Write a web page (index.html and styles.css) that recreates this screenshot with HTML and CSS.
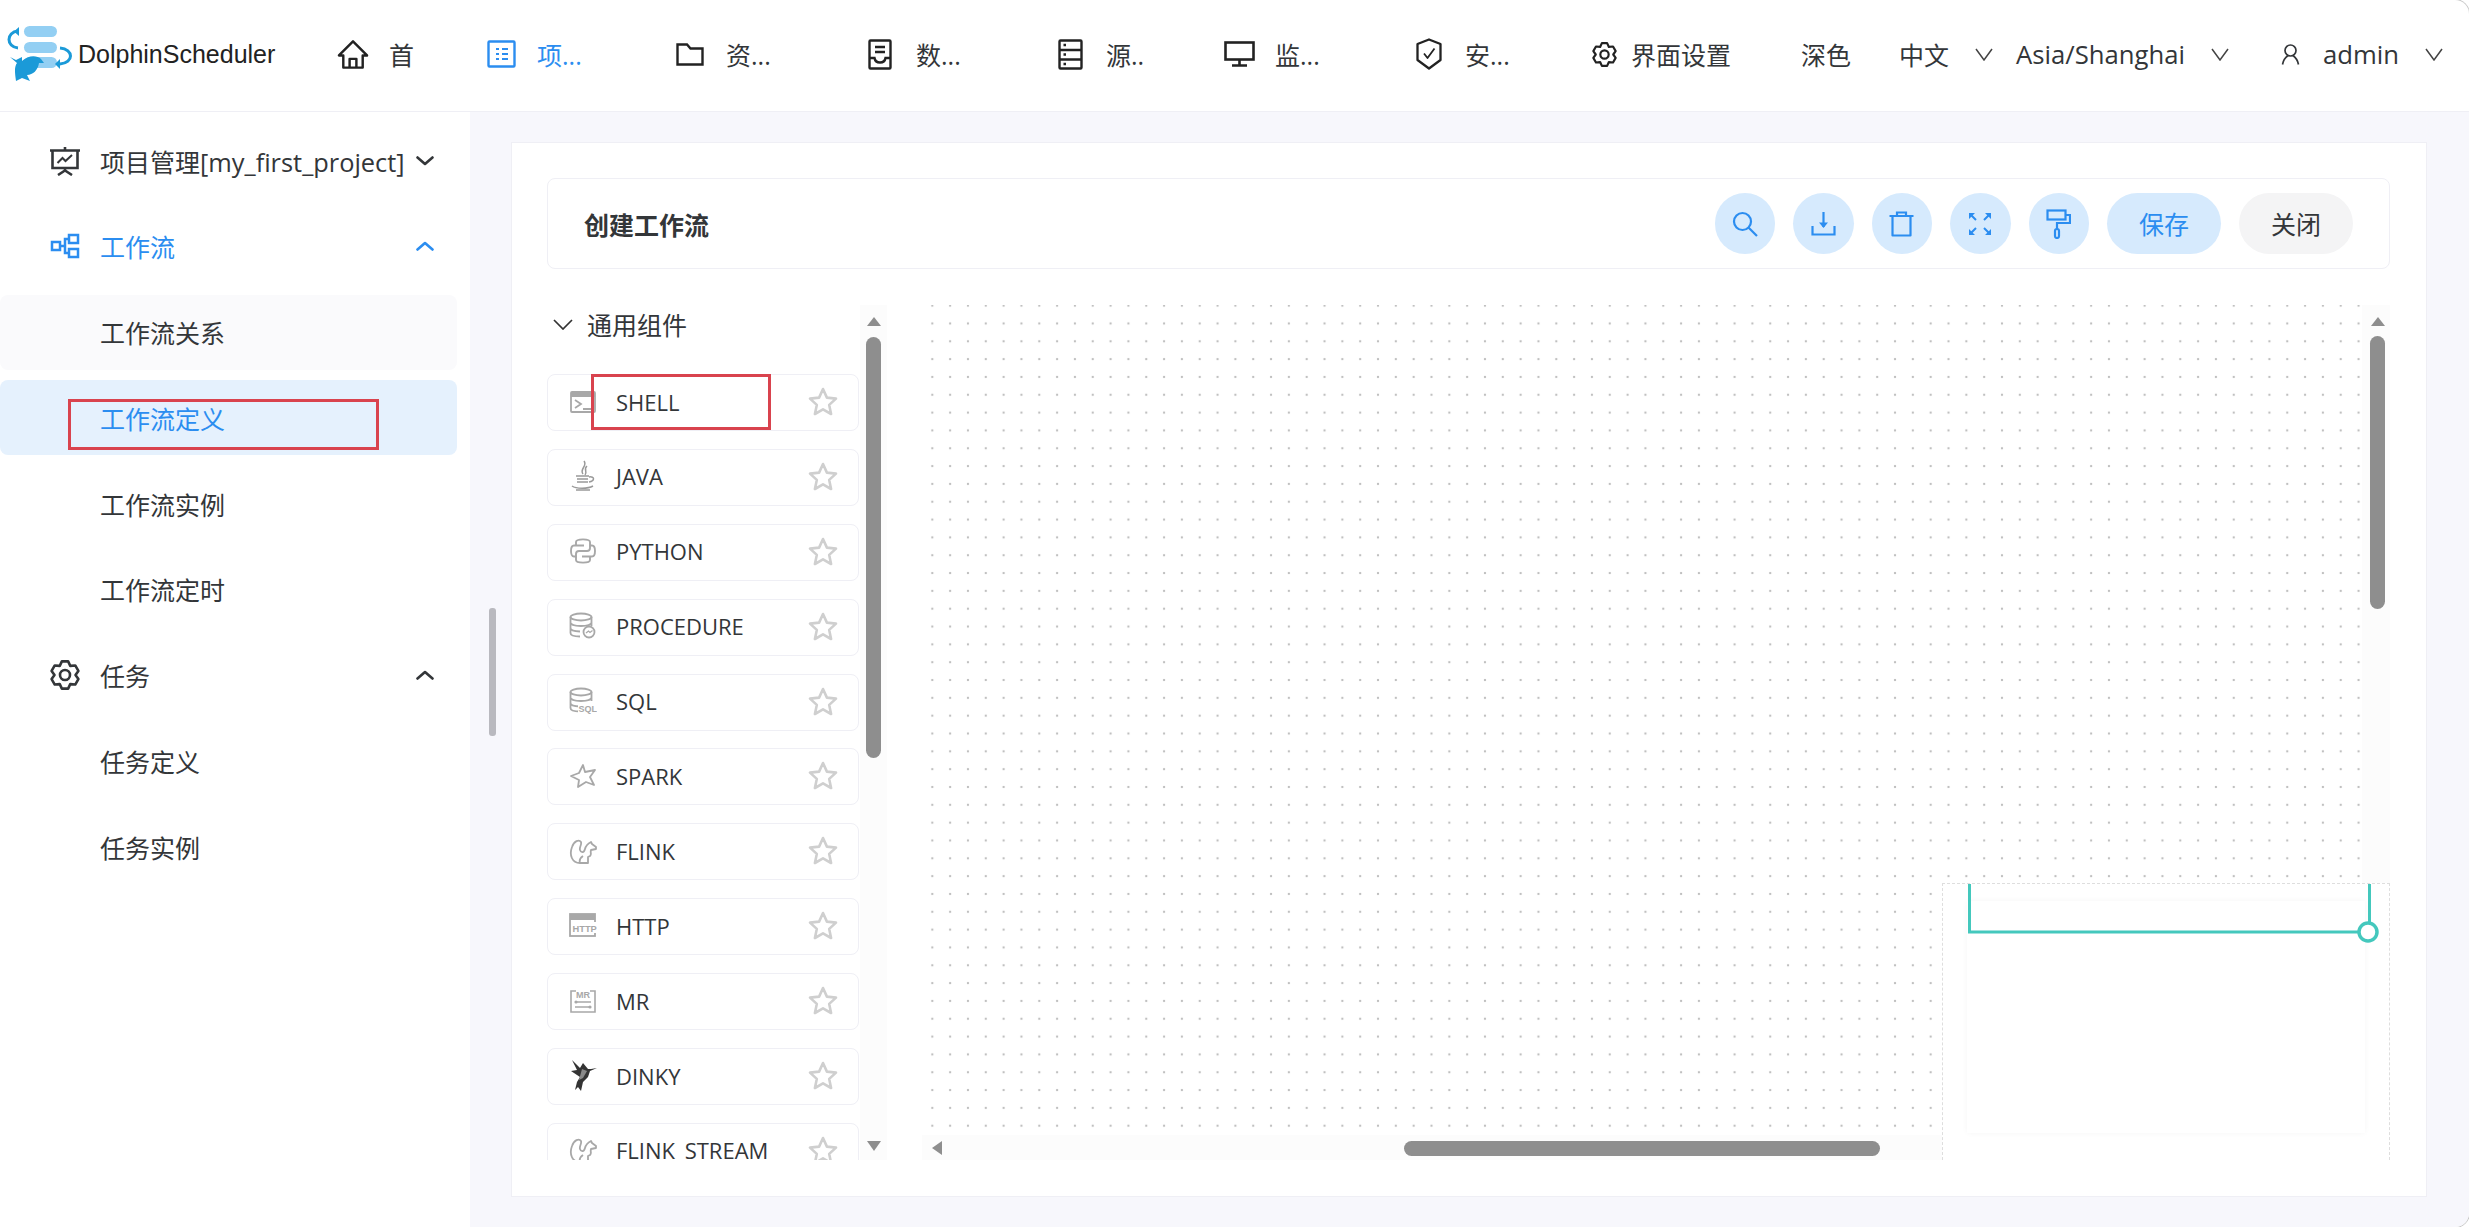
FILE: index.html
```html
<!DOCTYPE html>
<html lang="zh-CN">
<head>
  <meta charset="UTF-8">
  <title>DolphinScheduler</title>
  <link rel="stylesheet" href="styles.css">
</head>
<body>
  <svg class="defs" width="0" height="0">
    <symbol id="gear" viewBox="0 0 30 30">
      <path d="M11.85 1.36H18.15L20.25 5.91L25.24 5.45L28.39 10.91L25.5 15L28.39 19.09L25.24 24.55L20.25 24.09L18.15 28.64H11.85L9.75 24.09L4.76 24.55L1.61 19.09L4.5 15L1.61 10.91L4.76 5.45L9.75 5.91Z" fill="none" stroke="currentColor" stroke-width="2.6" stroke-linejoin="round"/>
      <circle cx="15" cy="15" r="5" fill="none" stroke="currentColor" stroke-width="2.6"/>
    </symbol>
    <symbol id="star" viewBox="0 0 30 29">
      <path d="M15 2L18.9 10.6L28 11.6L21.2 17.9L23.1 27L15 22.4L6.9 27L8.8 17.9L2 11.6L11.1 10.6Z" fill="none" stroke="currentColor" stroke-width="2.6" stroke-linejoin="round"/>
    </symbol>
    <symbol id="db" viewBox="0 0 28 28">
      <g fill="none" stroke="currentColor" stroke-width="1.8">
        <ellipse cx="12" cy="5" rx="10.5" ry="3.5"/>
        <path d="M1.5 5V21C1.5 23 5 24.5 11 24.5M22.5 5V14M1.5 10.5C1.5 12.5 6 14 12 14S22.5 12.5 22.5 10.5M1.5 16C1.5 18 5 19.3 11 19.5"/>
      </g>
    </symbol>
    <symbol id="squirrel" viewBox="0 0 28 28">
      <path d="M11 26C3 26 0 18 3 10C5 4 10 2 12 5C13 8 10 10 11 13C12 16 15 16 16 12C17 8 20 6 22 5L23 7L27 10L27 12L22 13C21 16 23 17 21 19L19 20L19 26H11C10 23 11 21 14 19" fill="none" stroke="currentColor" stroke-width="1.8" stroke-linejoin="round"/>
    </symbol>
    <symbol id="chev-thin" viewBox="0 0 18 13">
      <path d="M1 1L9 12L17 1" fill="none" stroke="currentColor" stroke-width="1.5"/>
    </symbol>
    <symbol id="chev-down" viewBox="0 0 18 10">
      <path d="M1.5 1.5L9 8L16.5 1.5" fill="none" stroke="currentColor" stroke-width="2.6" stroke-linecap="round" stroke-linejoin="round"/>
    </symbol>
    <symbol id="chev-up" viewBox="0 0 18 10">
      <path d="M1.5 8.5L9 2L16.5 8.5" fill="none" stroke="currentColor" stroke-width="2.6" stroke-linecap="round" stroke-linejoin="round"/>
    </symbol>
  </svg>

  <div class="app">
    <header class="topbar">
      <div class="logo">
        <svg width="68" height="56" viewBox="0 0 68 56">
          <rect x="18" y="0" width="33" height="11" rx="5.5" fill="#93cff3"/>
          <rect x="18" y="16" width="33" height="11" rx="5.5" fill="#93cff3"/>
          <rect x="18" y="31" width="33" height="11" rx="5.5" fill="#93cff3"/>
          <path d="M12 5C0 6 0 21 12 22" fill="none" stroke="#1b9ad8" stroke-width="3"/>
          <path d="M13 1V10L8 5.5Z" fill="#1b9ad8"/>
          <path d="M54 22C68 23 68 37 54 38" fill="none" stroke="#1b9ad8" stroke-width="3"/>
          <path d="M54 33V43L49 38Z" fill="#1b9ad8"/>
          <path d="M4 31L10 34L16 31L16 35C22 29 31 29 35 33L38 37L33 37C32 44 27 49 21 49L24 55L16 52L10 55C9 47 8 41 11 37Z" fill="#1b9ad8"/>
        </svg>
        <span class="logo-name">DolphinScheduler</span>
      </div>
      <nav class="topnav">
        <div class="nav-item">
          <span class="nav-ico"><svg width="33" height="31" viewBox="0 0 33 31" fill="none" stroke="currentColor" stroke-width="2.5" stroke-linejoin="round"><path d="M16.5 2L2 16.5H6.5V29H26.5V16.5H31Z"/><path d="M13 29V20H20V29"/></svg></span>
          <span>首</span>
        </div>
        <div class="nav-item active">
          <span class="nav-ico"><svg width="29" height="28" viewBox="0 0 29 28" fill="none" stroke="currentColor" stroke-width="2.4"><rect x="1.5" y="1.5" width="26" height="25" rx="1"/><path d="M9 9H12M15 9H21M9 14H12M15 14H21M9 19H12M15 19H21" stroke-width="2"/></svg></span>
          <span>项...</span>
        </div>
        <div class="nav-item">
          <span class="nav-ico"><svg width="28" height="23" viewBox="0 0 28 23" fill="none" stroke="currentColor" stroke-width="2.4"><path d="M1.5 1.5H11L14.5 5.5H26.5V21.5H1.5Z"/></svg></span>
          <span>资...</span>
        </div>
        <div class="nav-item">
          <span class="nav-ico"><svg width="24" height="31" viewBox="0 0 24 31" fill="none" stroke="currentColor" stroke-width="2.4"><rect x="1.5" y="1.5" width="21" height="28" rx="1"/><path d="M7 8H17M7 13H17"/><path d="M1.5 19H6.5C7.5 25 16.5 25 17.5 19H22.5"/></svg></span>
          <span>数...</span>
        </div>
        <div class="nav-item">
          <span class="nav-ico"><svg width="25" height="31" viewBox="0 0 25 31" fill="none" stroke="currentColor" stroke-width="2.4"><rect x="1.5" y="1.5" width="22" height="28" rx="1"/><path d="M1.5 11H23.5M1.5 20.5H23.5"/><path d="M5.5 6H8M5.5 15.5H8M5.5 25H8"/></svg></span>
          <span>源..</span>
        </div>
        <div class="nav-item">
          <span class="nav-ico"><svg width="31" height="26" viewBox="0 0 31 26" fill="none" stroke="currentColor" stroke-width="2.6"><rect x="1.5" y="1.5" width="28" height="17"/><path d="M15.5 19V24M8 24.5H23"/></svg></span>
          <span>监...</span>
        </div>
        <div class="nav-item">
          <span class="nav-ico"><svg width="26" height="32" viewBox="0 0 26 32" fill="none" stroke="currentColor" stroke-width="2.3" stroke-linejoin="round"><path d="M13 1.5L24.5 6V22L13 30.5L1.5 22V6Z"/><path d="M8 15.5L11.5 20L18.5 10.5" stroke-width="1.8"/></svg></span>
          <span>安...</span>
        </div>
        <div class="nav-item gear-item">
          <span class="nav-ico"><svg class="gear-top" width="25" height="25"><use href="#gear"/></svg></span>
          <span>界面设置</span>
        </div>
        <div class="nav-item"><span>深色</span></div>
        <div class="nav-item">
          <span>中文</span>
          <svg class="sel-chev" width="18" height="13"><use href="#chev-thin"/></svg>
        </div>
        <div class="nav-item">
          <span class="latin">Asia/Shanghai</span>
          <svg class="sel-chev" width="18" height="13"><use href="#chev-thin"/></svg>
        </div>
        <div class="nav-item">
          <svg class="user-ico" width="19" height="21" viewBox="0 0 19 21" fill="none" stroke="currentColor" stroke-width="1.7"><circle cx="9.5" cy="6.5" r="5.5"/><path d="M1.5 20.5C2.5 15 5 13 7 11.5M17.5 20.5C16.5 15 14 13 12 11.5"/></svg>
          <span class="latin">admin</span>
          <svg class="sel-chev" width="18" height="13"><use href="#chev-thin"/></svg>
        </div>
      </nav>
    </header>

    <div class="content">
      <aside class="sidebar">
        <div class="menu-item">
          <span class="menu-ico"><svg width="30" height="30" viewBox="0 0 30 30" fill="none" stroke="currentColor" stroke-width="2.6"><path d="M0 4.5H30M2.5 4.5V22H27.5V4.5M15 1V4.5M15 22V24.5M8 29L15 24.5L22 29"/><path d="M7.5 17L12.5 12L15.5 15L22 9" stroke-width="2"/></svg></span>
          <span>项目管理<span class="project-name">[my_first_project]</span></span>
          <svg class="menu-chev" width="18" height="10"><use href="#chev-down"/></svg>
        </div>
        <div class="menu-item blue">
          <span class="menu-ico"><svg width="30" height="26" viewBox="0 0 30 26" fill="none" stroke="currentColor" stroke-width="2.5"><rect x="2" y="9" width="8" height="8"/><rect x="19" y="2" width="9" height="8"/><rect x="19" y="16" width="9" height="8"/><path d="M10 13H15V6H19M15 13V20H19"/></svg></span>
          <span>工作流</span>
          <svg class="menu-chev" width="18" height="10"><use href="#chev-up"/></svg>
        </div>
        <div class="menu-item sub hovered"><span>工作流关系</span></div>
        <div class="menu-item sub selected">
          <span>工作流定义</span>
          <div class="red-box side-box"></div>
        </div>
        <div class="menu-item sub"><span>工作流实例</span></div>
        <div class="menu-item sub"><span>工作流定时</span></div>
        <div class="menu-item">
          <span class="menu-ico"><svg width="30" height="30"><use href="#gear"/></svg></span>
          <span>任务</span>
          <svg class="menu-chev" width="18" height="10"><use href="#chev-up"/></svg>
        </div>
        <div class="menu-item sub"><span>任务定义</span></div>
        <div class="menu-item sub"><span>任务实例</span></div>
      </aside>
      <div class="side-scroll"></div>

      <main class="main">
        <section class="card">
          <div class="toolbar">
            <h2 class="title">创建工作流</h2>
            <div class="actions">
              <button class="round-btn"><svg width="26" height="26" viewBox="0 0 26 26" fill="none" stroke="currentColor" stroke-width="2.2"><circle cx="10.5" cy="10.5" r="8.5"/><path d="M16.5 16.5L25 25"/></svg></button>
              <button class="round-btn"><svg width="25" height="25" viewBox="0 0 25 25" fill="none" stroke="currentColor" stroke-width="2.2"><path d="M12.5 1V16"/><path d="M8 11.5H17L12.5 17Z" fill="currentColor" stroke="none"/><path d="M1.5 15V23.5H23.5V15"/></svg></button>
              <button class="round-btn"><svg width="25" height="26" viewBox="0 0 25 26" fill="none" stroke="currentColor" stroke-width="2.2"><path d="M0.5 5H24.5M8 5V1.5H17V5"/><path d="M3.5 5V24.5H21.5V5" stroke-linejoin="round"/></svg></button>
              <button class="round-btn"><svg width="24" height="24" viewBox="0 0 24 24" fill="none" stroke="currentColor" stroke-width="2"><path d="M2 2L8 8M22 2L16 8M2 22L8 16M22 22L16 16"/><path d="M1 1H7L1 7ZM23 1H17L23 7ZM1 23H7L1 17ZM23 23H17L23 17Z" fill="currentColor" stroke="none"/></svg></button>
              <button class="round-btn"><svg width="25" height="30" viewBox="0 0 25 30" fill="none" stroke="currentColor" stroke-width="2.2"><rect x="1.5" y="1.5" width="18" height="9"/><path d="M20 6H24V14H11V20"/><rect x="9" y="20" width="4" height="9" rx="2"/></svg></button>
              <button class="text-btn primary">保存</button>
              <button class="text-btn">关闭</button>
            </div>
          </div>

          <div class="dag">
            <div class="panel">
              <div class="panel-head">
                <svg class="panel-chev" width="20" height="11" viewBox="0 0 20 11"><path d="M1 1L10 10L19 1" fill="none" stroke="currentColor" stroke-width="1.7"/></svg>
                <span>通用组件</span>
              </div>
              <div class="task-list">
                <div class="task">
                  <span class="task-ico"><svg width="28" height="24" viewBox="0 0 28 24" fill="none" stroke="#a8a8a8" stroke-width="1.8"><rect x="2" y="2" width="24" height="20" rx="1"/><path d="M2 5H26" stroke-width="4"/><path d="M6 10L12 14L6 18M14 19H22"/></svg></span>
                  <span>SHELL</span>
                  <svg class="star" width="30" height="29"><use href="#star"/></svg>
                  <div class="red-box shell-box"></div>
                </div>
                <div class="task">
                  <span class="task-ico"><svg width="26" height="32" viewBox="0 0 26 32" fill="none" stroke="#999" stroke-width="1.5"><path d="M14 1C18 6 9 9 13 14M17 6C13 9 18 12 15 15"/><path d="M6 16H19M7 19H18M7 22H18M2 26C6 29 18 29 23 26M6 30H20M19 17C25 16 25 21 19 22"/></svg></span>
                  <span>JAVA</span>
                  <svg class="star" width="30" height="29"><use href="#star"/></svg>
                </div>
                <div class="task">
                  <span class="task-ico"><svg width="28" height="28" viewBox="0 0 28 28" fill="none" stroke="#a8a8a8" stroke-width="1.9"><path d="M7 9V5C7 1.5 21 1.5 21 5V11C21 13 19.5 14 18 14H10C8 14 7 15.5 7 17V19.5H5C1 19.5 1 8.5 5 8.5H15"/><path d="M21 19V23C21 26.5 7 26.5 7 23V19.5M21 8.5H23C27 8.5 27 19.5 23 19.5H13"/></svg></span>
                  <span>PYTHON</span>
                  <svg class="star" width="30" height="29"><use href="#star"/></svg>
                </div>
                <div class="task">
                  <span class="task-ico"><svg class="ico-box" width="28" height="28"><use href="#db"/><circle cx="20" cy="20" r="5.5" fill="#fff" stroke="currentColor" stroke-width="1.8"/><path d="M17 21L19.5 19L21 20.5L23.5 18.5" fill="none" stroke="currentColor" stroke-width="1.3"/></svg></span>
                  <span>PROCEDURE</span>
                  <svg class="star" width="30" height="29"><use href="#star"/></svg>
                </div>
                <div class="task">
                  <span class="task-ico"><svg class="ico-box" width="28" height="28"><use href="#db"/><rect x="9" y="16" width="19" height="10" fill="#fff"/><text x="9.5" y="25" class="ico-text bold">SQL</text></svg></span>
                  <span>SQL</span>
                  <svg class="star" width="30" height="29"><use href="#star"/></svg>
                </div>
                <div class="task">
                  <span class="task-ico"><svg width="27" height="26" viewBox="0 0 27 26" fill="none" stroke="#a8a8a8" stroke-width="1.8" stroke-linejoin="round"><path d="M13 2L15 9L25 7L20 14L24 22L16 19L8 24L9 17L1 13L9 10Z"/></svg></span>
                  <span>SPARK</span>
                  <svg class="star" width="30" height="29"><use href="#star"/></svg>
                </div>
                <div class="task">
                  <span class="task-ico"><svg class="ico-box" width="28" height="28"><use href="#squirrel"/></svg></span>
                  <span>FLINK</span>
                  <svg class="star" width="30" height="29"><use href="#star"/></svg>
                </div>
                <div class="task">
                  <span class="task-ico"><svg class="ico-box" width="29" height="25" viewBox="0 0 29 25"><rect x="1" y="1" width="25" height="22" fill="none" stroke="currentColor" stroke-width="1.8"/><rect x="1" y="1" width="25" height="6" fill="currentColor"/><rect x="3" y="9" width="26" height="11" fill="#fff"/><text x="3.5" y="18.5" class="ico-text bold wide">HTTP</text></svg></span>
                  <span>HTTP</span>
                  <svg class="star" width="30" height="29"><use href="#star"/></svg>
                </div>
                <div class="task">
                  <span class="task-ico"><svg class="ico-box" width="26" height="24" viewBox="0 0 26 24"><path d="M6 2H1V23H25V2H20" fill="none" stroke="currentColor" stroke-width="1.6"/><text x="6" y="9" class="ico-text bold">MR</text><path d="M5 13H21M5 18H21" stroke="currentColor" stroke-width="1.6"/><circle cx="6" cy="13" r="1.6" fill="currentColor"/><circle cx="20" cy="18" r="1.6" fill="currentColor"/></svg></span>
                  <span>MR</span>
                  <svg class="star" width="30" height="29"><use href="#star"/></svg>
                </div>
                <div class="task">
                  <span class="task-ico"><svg width="28" height="32" viewBox="0 0 28 32"><path d="M3 0L11 8L14 3L19 9L22 9L28 8L21 11L19 17L14 22L12 31L9 27L6 30L8 22L11 17L2 11L8 10Z" fill="#333"/><path d="M13 9L18 11L14 18L10 20Z" fill="#888"/></svg></span>
                  <span>DINKY</span>
                  <svg class="star" width="30" height="29"><use href="#star"/></svg>
                </div>
                <div class="task">
                  <span class="task-ico"><svg class="ico-box" width="28" height="28"><use href="#squirrel"/></svg></span>
                  <span>FLINK_STREAM</span>
                  <svg class="star" width="30" height="29"><use href="#star"/></svg>
                </div>
              </div>
              <div class="scroll-v panel-scroll">
                <i class="arrow up"></i>
                <i class="thumb-v list-thumb"></i>
                <i class="arrow down"></i>
              </div>
            </div>

            <div class="canvas">
              <div class="scroll-v canvas-scroll">
                <i class="arrow up"></i>
                <i class="thumb-v canvas-thumb"></i>
              </div>
              <div class="scroll-h">
                <i class="arrow left"></i>
                <i class="thumb-h"></i>
              </div>
              <div class="minimap">
                <div class="mini-page"></div>
                <svg class="mini-view" width="415" height="62" viewBox="0 0 415 62" fill="none" stroke="#44c8bd" stroke-width="3"><path d="M1.5 0V48H392"/><path d="M401.5 0V38"/><circle cx="400" cy="48" r="9" fill="#fff" stroke-width="3.5"/></svg>
              </div>
            </div>
          </div>
        </section>
      </main>
    </div>
  </div>
</body>
</html>
```

FILE: styles.css
```css
* {
  box-sizing: border-box;
}

html,
body {
  margin: 0;
  height: 100%;
  background: #fff;
  overflow: hidden;
}

body {
  font-family: "Open Sans", "Noto Sans CJK SC", sans-serif;
  font-size: 25px;
  color: #333639;
}

.defs {
  position: absolute;
}

.latin {
  font-size: 25.7px;
}

.project-name {
  font-size: 25.4px;
}

.app {
  display: flex;
  flex-direction: column;
  height: 1227px;
  border-radius: 0 14px 14px 0;
  box-shadow: 0 0 0 1px #c8c8c8;
  overflow: hidden;
  background: #fff;
}

/* top bar */
.topbar {
  display: flex;
  align-items: center;
  flex: none;
  height: 112px;
  padding-left: 6px;
  padding-bottom: 3px;
  border-bottom: 1px solid #efeff5;
}

.logo {
  display: flex;
  align-items: center;
  width: 331px;
  height: 56px;
}

.logo-name {
  font-family: "Liberation Sans", sans-serif;
  font-size: 25px;
  margin-left: 4px;
  color: #222;
}

.topnav {
  display: grid;
  grid-template-columns: 148px 189px 190px 190px 169px 190px 175px 213px 98px 117px 265px 188px;
  flex: 1;
}

.nav-item {
  display: flex;
  align-items: center;
  white-space: nowrap;
}

.nav-item.active {
  color: #2b8df0;
}

.nav-ico {
  display: flex;
  justify-content: center;
  align-items: center;
  width: 32px;
  margin-right: 20px;
  color: #222;
}

.active .nav-ico {
  color: #2b8df0;
}

.gear-item .nav-ico {
  margin-right: 11px;
}

.sel-chev {
  margin-left: 26px;
  color: #444;
}

.user-ico {
  margin-right: 23px;
}

/* sidebar */
.content {
  display: flex;
  flex: 1;
  min-height: 0;
  position: relative;
  background: #f7f7fc;
}

.sidebar {
  flex: none;
  width: 470px;
  padding-top: 11px;
  background: #fff;
}

.menu-item {
  display: flex;
  align-items: center;
  position: relative;
  width: 457px;
  height: 75px;
  margin-bottom: 10.75px;
  padding: 0 23px 0 50px;
  border-radius: 8px;
  white-space: nowrap;
}

.menu-item.blue,
.menu-item.selected {
  color: #2b8df0;
}

.menu-item.sub {
  padding-left: 100px;
}

.menu-item.hovered {
  background: #fafafc;
}

.menu-item.selected {
  background: #e5f1fd;
}

.menu-ico {
  display: flex;
  width: 30px;
  margin-right: 20px;
}

.menu-chev {
  margin-left: auto;
  flex: none;
}

.side-scroll {
  position: absolute;
  left: 489px;
  top: 496px;
  width: 7px;
  height: 128px;
  border-radius: 3px;
  background: #b9b9bf;
}

.red-box {
  position: absolute;
  border: 3px solid #d9434e;
}

.side-box {
  left: 68px;
  top: 19px;
  width: 311px;
  height: 51px;
}

.shell-box {
  left: 43px;
  top: -1px;
  width: 180px;
  height: 56px;
}

/* main card */
.main {
  flex: 1;
  min-width: 0;
  padding: 30px 42px 30px 41px;
}

.card {
  display: flex;
  flex-direction: column;
  height: 100%;
  padding: 35px 36px 36px 35px;
  background: #fff;
  border: 1px solid #efeff5;
}

.toolbar {
  display: flex;
  align-items: center;
  justify-content: space-between;
  flex: none;
  height: 91px;
  padding: 0 36px 0 36px;
  border: 1px solid #efeff5;
  border-radius: 8px;
}

.title {
  margin: 0;
  font-size: 25px;
  font-weight: 700;
}

.actions {
  display: flex;
  gap: 18px;
}

.round-btn,
.text-btn {
  display: flex;
  align-items: center;
  justify-content: center;
  height: 61px;
  padding: 0;
  border: none;
  border-radius: 31px;
  font: inherit;
}

.round-btn {
  width: 60.5px;
  background: #d6eafd;
  color: #2b8df0;
}

.text-btn {
  width: 114px;
  padding-bottom: 2px;
  background: #f4f4f5;
  color: #333639;
}

.text-btn.primary {
  background: #d6eafd;
  color: #2b8df0;
}

/* dag area */
.dag {
  display: flex;
  flex: 1;
  min-height: 0;
  margin-top: 36px;
}

.panel {
  display: flex;
  flex-direction: column;
  flex: none;
  position: relative;
  width: 340px;
  margin-right: 35px;
}

.panel-head {
  display: flex;
  align-items: center;
  flex: none;
  height: 38px;
  margin-bottom: 31px;
  padding-left: 6px;
}

.panel-chev {
  margin-right: 14px;
  color: #333;
}

.task-list {
  flex: 1;
  width: 312px;
  overflow: hidden;
}

.task {
  display: flex;
  align-items: center;
  position: relative;
  height: 57px;
  margin-bottom: 17.9px;
  padding: 0 20px 2px 20px;
  border: 1px solid #efeff5;
  border-radius: 8px;
  font-size: 22px;
  white-space: nowrap;
}

.task-ico {
  display: flex;
  justify-content: center;
  flex: none;
  width: 30px;
  margin-right: 18px;
  color: #a8a8a8;
}

.ico-text {
  font-family: "Liberation Sans", sans-serif;
  font-size: 9px;
  fill: currentColor;
}

.ico-text.bold {
  font-weight: 700;
}

.ico-text.wide {
  font-size: 9.3px;
}

.star {
  margin-left: auto;
  flex: none;
  color: #cfcfcf;
}

/* scrollbars */
.scroll-v {
  position: absolute;
  top: 0;
  width: 27px;
  background: #fcfcfc;
}

.panel-scroll {
  right: 0;
  bottom: 0;
}

.canvas-scroll {
  right: 0;
  bottom: 25px;
  width: 28px;
}

.thumb-v {
  position: absolute;
  left: 6px;
  width: 15px;
  border-radius: 8px;
  background: #8e8e8e;
}

.list-thumb {
  top: 32px;
  height: 421px;
}

.canvas-thumb {
  left: 8px;
  top: 31px;
  height: 273px;
}

.arrow {
  position: absolute;
  width: 0;
  height: 0;
  border-style: solid;
  border-color: transparent;
}

.arrow.up {
  left: 7px;
  top: 12px;
  border-width: 0 7px 9px;
  border-bottom-color: #8e8e8e;
}

.canvas-scroll .arrow.up {
  left: 9px;
}

.arrow.down {
  left: 7px;
  bottom: 9px;
  border-width: 10px 7px 0;
  border-top-color: #8e8e8e;
}

.arrow.left {
  left: 10px;
  top: 6px;
  border-width: 7px 10px 7px 0;
  border-right-color: #8e8e8e;
}

.scroll-h {
  position: absolute;
  left: 0;
  right: 0;
  bottom: 0;
  height: 25px;
  background: #fcfcfc;
}

.thumb-h {
  position: absolute;
  left: 482px;
  top: 6px;
  width: 476px;
  height: 15px;
  border-radius: 8px;
  background: #8e8e8e;
}

.canvas {
  flex: 1;
  position: relative;
  overflow: hidden;
  background-image: radial-gradient(circle, #c0c0c0 1px, transparent 1.6px);
  background-size: 17.83px 17.83px;
  background-position: 1.4px -8.3px;
}

.minimap {
  position: absolute;
  right: 0;
  bottom: 0;
  width: 448px;
  height: 277px;
  background: #fff;
  border: 1px dashed #dedede;
  border-bottom: none;
}

.mini-page {
  position: absolute;
  left: 24px;
  top: 17px;
  width: 398px;
  height: 232px;
  background: #fff;
  box-shadow: 0 0 6px rgba(0, 0, 0, 0.04);
}

.mini-view {
  position: absolute;
  left: 25px;
  top: 0;
}
```
